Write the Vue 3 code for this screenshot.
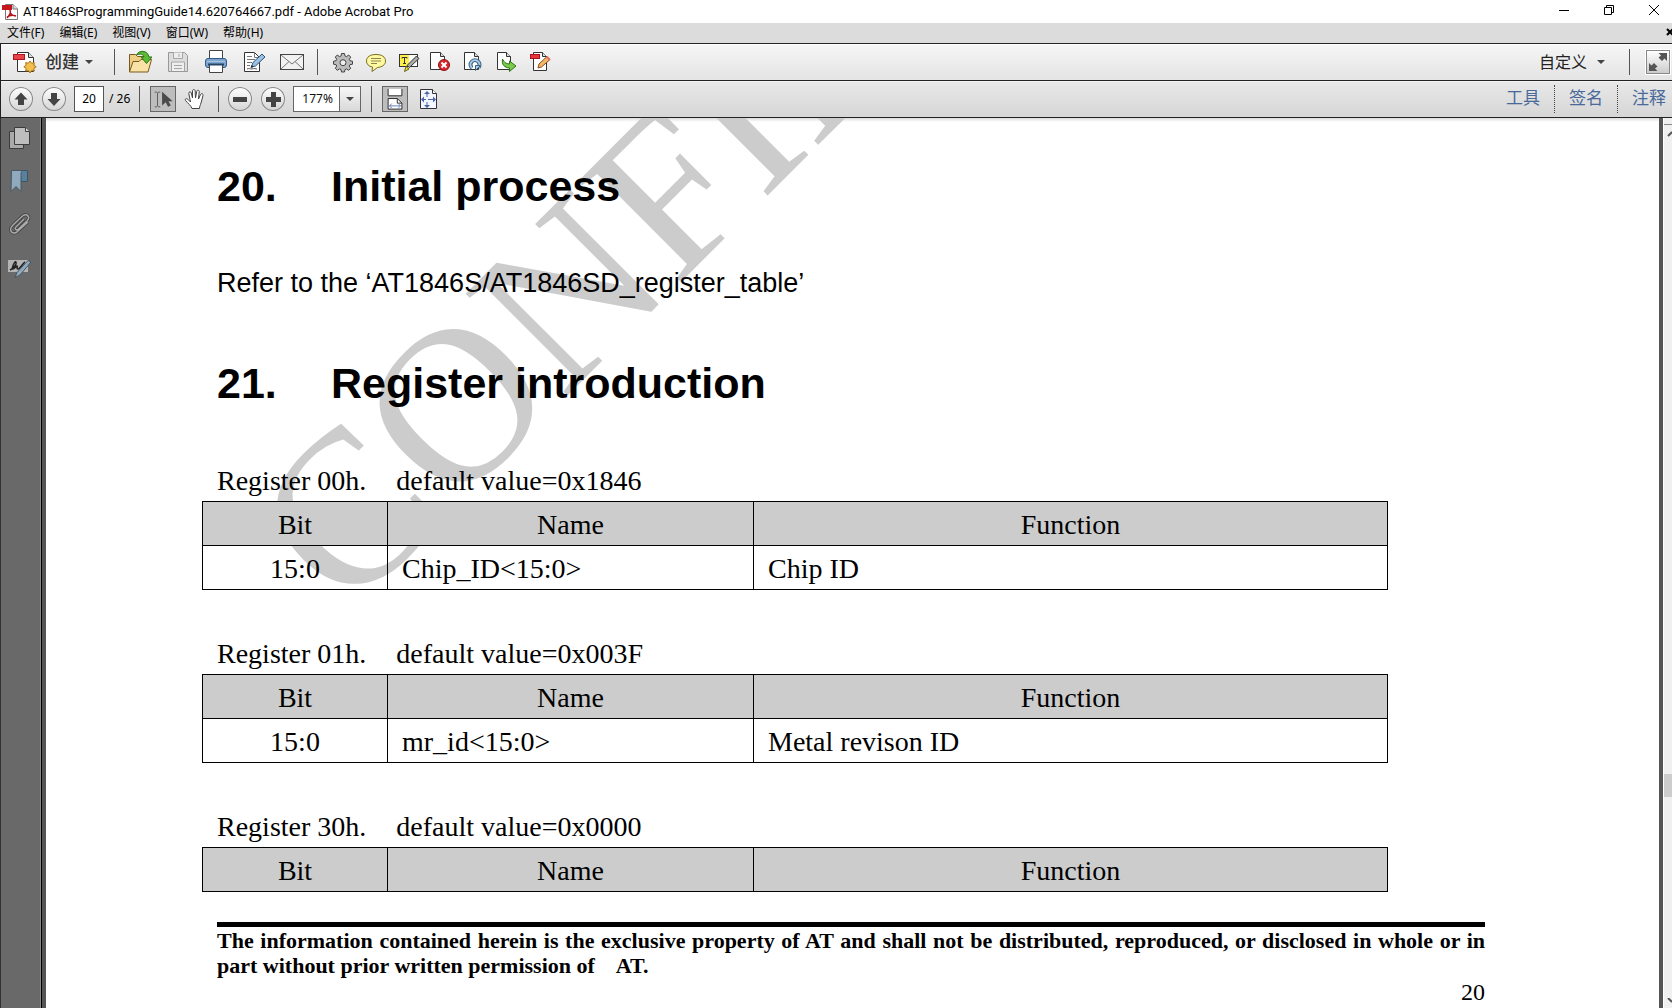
<script setup>
import { ref } from 'vue'

const menus = ['文件(F)', '编辑(E)', '视图(V)', '窗口(W)', '帮助(H)']
const page = ref('20')
const zoom = ref('177%')

const registers = [
  { title: 'Register 00h.', value: 'default value=0x1846', rows: [['15:0', 'Chip_ID<15:0>', 'Chip ID']] },
  { title: 'Register 01h.', value: 'default value=0x003F', rows: [['15:0', 'mr_id<15:0>', 'Metal revison ID']] },
  { title: 'Register 30h.', value: 'default value=0x0000', rows: [] },
]
</script>

<template>
  <div class="app">
    <header class="titlebar">
      <svg class="app-icon" width="16" height="16" viewBox="0 0 16 16">
        <path d="M3.500.5h7.500l4.500 4.500v10.500h-12z" fill="#fff" stroke="#777" />
        <path d="M11 .5v4.500h4.500" fill="#ddd" stroke="#777" />
        <rect x="0" y="1" width="10" height="5" fill="#c4161c" />
        <path d="M5 14c3-3 4-6 3-8M8 6c0 4 3 6 6 6M5 13c3-2 6-2 9-1" fill="none" stroke="#b5121b" stroke-width="1.500" />
      </svg>
      <span class="title">AT1846SProgrammingGuide14.620764667.pdf - Adobe Acrobat Pro</span>
      <div class="window-buttons">
        <button aria-label="Minimize"><svg width="12" height="12" viewBox="0 0 12 12"><path d="M1 6.500h10" stroke="#000" /></svg></button>
        <button aria-label="Restore"><svg width="12" height="12" viewBox="0 0 12 12" fill="none" stroke="#000"><path d="M1.500 3.500h7v7h-7zM3.500 3.500v-2h7v7h-2" /></svg></button>
        <button aria-label="Close"><svg width="12" height="12" viewBox="0 0 12 12"><path d="M1 1l10 10M11 1L1 11" stroke="#000" /></svg></button>
      </div>
    </header>

    <nav class="menubar">
      <button v-for="m in menus" :key="m">{{ m }}</button>
      <button class="close-doc" aria-label="Close document">
        <svg width="8" height="8" viewBox="0 0 8 8"><path d="M1 1l6 6M7 1L1 7" stroke="#000" stroke-width="2" /></svg>
      </button>
    </nav>

    <div class="toolbar main-tools">
      <button class="create">
        <svg width="24" height="24" viewBox="0 0 24 24">
          <path d="M4.500 2.500h11l5 5v14h-16z" fill="#fff" stroke="#333" />
          <path d="M15.500 2.500v5h5" fill="#ddd" stroke="#333" />
          <rect x=".5" y="4.500" width="11" height="5" fill="#e8434b" stroke="#b0141c" />
          <path d="M17 11l1.600 2.200 2.700-.6-.4 2.700 2.300 1.500-2.300 1.500.4 2.700-2.700-.5L17 23l-1.600-2.500-2.700.5.4-2.700-2.300-1.500 2.300-1.500-.4-2.700 2.700.6z" fill="#f4be4c" stroke="#a8761c" />
        </svg>
        <span>创建</span>
        <i class="caret"></i>
      </button>
      <i class="sep"></i>
      <div class="group wide">
        <button aria-label="Open">
          <svg width="24" height="24" viewBox="0 0 24 24">
            <path d="M1.500 21.500v-17h6l2 2h11v4" fill="#efcf86" stroke="#7a5a1c" />
            <path d="M1.500 22l3.500-10.500h6l2-2h10.500l-3.500 12.500z" fill="#f9e2a6" stroke="#7a5a1c" />
            <path d="M8.500 5c2-5 11-5.500 12.500 2h3l-5.500 6.500-5.500-6.500h3c-1-3.500-4-3.500-7.500-2z" fill="#5cba35" stroke="#2a7a18" />
          </svg>
        </button>
        <button aria-label="Save">
          <svg width="24" height="24" viewBox="0 0 24 24">
            <path d="M2.500 2.500h16l3 3v16h-19z" fill="#ddd" stroke="#999" />
            <path d="M7.500 2.500v6h9v-6M13 4v3M5.500 21v-9h13v9M8 15.500h8M8 18.500h8" fill="#eee" stroke="#a5a5a5" />
          </svg>
        </button>
        <button aria-label="Print">
          <svg width="24" height="24" viewBox="0 0 24 24">
            <path d="M5.500 9v-8.500h13v8.500" fill="#fff" stroke="#444" />
            <rect x="1.500" y="8.500" width="21" height="9" rx="2.500" fill="#7ea5cd" stroke="#315a86" />
            <path d="M3 11.500h18" stroke="#a8c5e2" />
            <path d="M5.500 14.500h13v8h-13z" fill="#fff" stroke="#444" />
            <path d="M4 14.500h16" stroke="#244668" stroke-width="2" />
          </svg>
        </button>
        <button aria-label="Edit">
          <svg width="24" height="24" viewBox="0 0 24 24">
            <path d="M2.500 2.500h10l5 5v14h-15z" fill="#fff" stroke="#333" />
            <path d="M12.500 2.500v5h5M5 6.500h5M5 9.500h8M5 12.500h5M5 15.500h3" fill="none" stroke="#777" />
            <path d="M9.500 17l1.500-4.500 9-8.500 3 3-9.500 9z" fill="#9bc1e3" stroke="#305577" />
            <path d="M8.500 18l1-3 2 2z" fill="#222" />
            <path d="M5 19c2-1 3 0 4 0s3-1 6 0" fill="none" stroke="#555" />
          </svg>
        </button>
        <button aria-label="E-mail">
          <svg width="24" height="24" viewBox="0 0 24 24">
            <rect x=".5" y="4.500" width="23" height="15" fill="#f2f2f2" stroke="#444" />
            <path d="M1 5l11 9 11-9M1 19l8-7.500M23 19l-8-7.500" fill="none" stroke="#777" />
          </svg>
        </button>
      </div>
      <i class="sep"></i>
      <div class="group">
        <button aria-label="Settings">
          <svg width="24" height="24" viewBox="0 0 24 24">
            <path d="M10.500 3.500h3l.5 2.500 1.500.6L17.700 5l2 2.100L18.300 9.300l.6 1.400 2.600.5v3l-2.600.5-.6 1.400 1.400 2.200-2 2-2.200-1.400-1.500.6-.5 2.500h-3l-.5-2.500-1.500-.6-2.200 1.400-2-2 1.400-2.200-.6-1.400-2.600-.5v-3l2.600-.5.6-1.400L4.300 7.100l2-2.100 2.200 1.600L10 6z" fill="#bbb" stroke="#444" />
            <circle cx="12" cy="12.700" r="3" fill="#eee" stroke="#444" />
          </svg>
        </button>
        <button aria-label="Comment">
          <svg width="24" height="24" viewBox="0 0 24 24">
            <path d="M12 4.500c6 0 9.500 2.500 9.500 6.500s-3.500 6-8 6.500L8 21.500l.5-4.500c-4-.7-6-3-6-6 0-4 3.500-6.500 9.500-6.500z" fill="#fff9a2" stroke="#776f1f" />
            <path d="M7 8.500h10M7 11h10M7 13.500h6" stroke="#8b8550" />
          </svg>
        </button>
        <button aria-label="Highlight text">
          <svg width="24" height="24" viewBox="0 0 24 24">
            <rect x="2.500" y="4.500" width="18" height="12" fill="#fff" stroke="#333" />
            <rect x="3" y="5" width="9" height="11" fill="#fff04a" />
            <path d="M5 8.500v-1h5v1M7.500 7.500v6M6 13.500h3" stroke="#333" fill="none" />
            <path d="M10 15.500L19.500 6l2.500 2.500-9.500 9z" fill="#aaa" stroke="#333" />
            <path d="M7.500 21.500l1.500-5 3 2.500z" fill="#f0e030" stroke="#6a6410" />
          </svg>
        </button>
        <button aria-label="Delete page">
          <svg width="24" height="24" viewBox="0 0 24 24">
            <path d="M.5 2.500h10l4 4v13h-14z" fill="#fff" stroke="#333" />
            <path d="M10.500 2.500v4h4" fill="#ddd" stroke="#333" />
            <circle cx="14" cy="15" r="5.500" fill="#d9262d" stroke="#8e1117" />
            <path d="M11.500 12.500l5 5M16.500 12.500l-5 5" stroke="#fff" stroke-width="2" />
          </svg>
        </button>
        <button aria-label="Rotate page">
          <svg width="24" height="24" viewBox="0 0 24 24">
            <path d="M1.500 2.500h10l4 4v13h-14z" fill="#fff" stroke="#333" />
            <path d="M11.500 2.500v4h4" fill="#ddd" stroke="#333" />
            <path d="M9 18a4.500 4.500 0 1 1 6.500-.5" fill="none" stroke="#3b6285" stroke-width="4" />
            <path d="M9 18a4.500 4.500 0 1 1 6.500-.5" fill="none" stroke="#a9c9e4" stroke-width="2" />
            <path d="M12.500 20.500v-5h5z" fill="#a9c9e4" stroke="#3b6285" />
          </svg>
        </button>
        <button aria-label="Export page">
          <svg width="24" height="24" viewBox="0 0 24 24">
            <path d="M1.500 2.500h9l4 4v13h-13z" fill="#fff" stroke="#333" />
            <path d="M10.500 2.500v4h4" fill="#ddd" stroke="#333" />
            <path d="M6.500 9c-1 6 2 8.500 7 9v3.500l6.500-5.500-6.500-5v3c-4 0-5.500-2-7-5z" fill="#7acb4d" stroke="#2c7417" />
          </svg>
        </button>
        <button aria-label="Edit PDF">
          <svg width="24" height="24" viewBox="0 0 24 24">
            <path d="M4.500 2.500h9l4 4v14h-13z" fill="#fff" stroke="#333" />
            <path d="M13.500 2.500v4h4" fill="#ddd" stroke="#333" />
            <rect x="1.500" y="4.500" width="9" height="4" fill="#e8343c" stroke="#a8141c" />
            <path d="M9 18l1-4 8-7.500 3 3-8.500 7.500z" fill="#f3b765" stroke="#8a4b1d" />
            <path d="M17 7.500l1.500-1.500 3 3-1.500 1.500z" fill="#e8706c" />
          </svg>
        </button>
      </div>
      <button class="customize"><span>自定义</span><i class="caret"></i></button>
      <i class="sep"></i>
      <button class="expand" aria-label="Read mode">
        <svg width="22" height="22" viewBox="0 0 22 22"><path d="M20 2v8l-2.500-2.500-2.500 2.500-3.500-3.500L14 4.500 11.500 2zM2 20v-8l2.500 2.500L7 12l3.500 3.500L8 17.500l2.500 2.500z" fill="#555" /></svg>
      </button>
    </div>

    <div class="toolbar nav-tools">
      <button class="round" aria-label="Previous page"><svg width="24" height="24" viewBox="0 0 24 24"><path d="M12 5.500l6.500 7H15v5.500H9v-5.500H5.500z" fill="#444" /></svg></button>
      <button class="round" aria-label="Next page"><svg width="24" height="24" viewBox="0 0 24 24"><path d="M12 19l6.500-7H15V6H9v6H5.500z" fill="#444" /></svg></button>
      <label class="pager"><input v-model="page" aria-label="Page number" /><span>/ 26</span></label>
      <i class="sep"></i>
      <button class="pressed" aria-label="Select tool">
        <svg width="24" height="24" viewBox="0 0 24 24">
          <path d="M3 4.500h2l1 1 1-1h2M6 5.500v14M3 20.500h2l1-1 1 1h2" fill="none" stroke="#555" />
          <path d="M11 4v15l4-3.500 2.500 5 3-1.500-2.500-4.500h4.500z" fill="#4a4a4a" />
        </svg>
      </button>
      <button class="hand" aria-label="Hand tool">
        <svg width="24" height="24" viewBox="0 0 24 24">
          <path d="M9 21.500c-1-3-4-5-6.500-8-1-1.500 1-2.500 2.300-1.200L7.500 15 5.800 6.500c-.2-2 2-2.200 2.500-.5L9.500 11V4c.2-2 2.500-2 2.700 0l.3 7 1.200-6.500c.5-2 2.800-1.500 2.500.5L15.500 12l2-4.500c.8-1.600 3-.8 2.500 1L18 16c-.5 2-1.500 3-1.500 5.500z" fill="#fff" stroke="#444" />
        </svg>
      </button>
      <i class="sep"></i>
      <button class="round" aria-label="Zoom out"><svg width="24" height="24" viewBox="0 0 24 24"><path d="M5 10h14v5H5z" fill="#444" /></svg></button>
      <button class="round" aria-label="Zoom in"><svg width="24" height="24" viewBox="0 0 24 24"><path d="M10 5h5v5h5v5h-5v5h-5v-5H5v-5h5z" fill="#444" /></svg></button>
      <div class="zoom">
        <select v-model="zoom" aria-label="Zoom level"><option>177%</option><option>100%</option></select>
        <span class="drop"><i class="caret"></i></span>
      </div>
      <i class="sep"></i>
      <button class="pressed" aria-label="Fit width">
        <svg width="24" height="24" viewBox="0 0 24 24">
          <path d="M4.500 1v7.500h15V1" fill="#fff" stroke="#222" />
          <path d="M4.500 23V11.500h10l5 5V23z" fill="#fff" stroke="#222" />
          <path d="M14.500 11.500v5h5" fill="none" stroke="#222" />
          <path d="M6 19.500h12M8.500 17l-2.500 2.500L8.500 22M15.500 17l2.500 2.500-2.500 2.500" fill="none" stroke="#5873b5" />
        </svg>
      </button>
      <button class="fit-page" aria-label="Fit page">
        <svg width="24" height="24" viewBox="0 0 24 24">
          <path d="M3.500 2.500h12l4 4v15h-16z" fill="#f4f7ff" stroke="#333" />
          <path d="M15.500 2.500v4h4" fill="#fff" stroke="#333" />
          <path d="M10 4l-3 3h6zM10 21l-3-3h6zM4 12.500l3-3v6zM19 12.500l-3-3v6z" fill="#4b65a9" />
          <path d="M10 7v3M10 15v3M7 12.500h2M11 12.500h5" stroke="#4b65a9" />
        </svg>
      </button>
      <div class="panels">
        <button>工具</button><button>签名</button><button>注释</button>
      </div>
    </div>

    <div class="workspace">
      <aside class="sidebar">
        <button aria-label="Page thumbnails">
          <svg width="24" height="24" viewBox="0 0 24 24">
            <path d="M2.500 5.500h14v17h-14z" fill="#aaa" stroke="#3c3c3c" />
            <path d="M7.500 1.500h11l4 4v13h-15z" fill="#bebebe" stroke="#3c3c3c" />
            <path d="M18.500 1.500v4h4" fill="#ddd" stroke="#3c3c3c" />
          </svg>
        </button>
        <button aria-label="Bookmarks">
          <svg width="24" height="24" viewBox="0 0 24 24">
            <path d="M13 1.500h7.500v11H14z" fill="#58819c" stroke="#3d5568" />
            <path d="M4.500 1.500h11c-1.500 1-1.500 3-1.500 5v16l-5-5-5 5z" fill="#91a9bc" stroke="#465866" />
          </svg>
        </button>
        <button aria-label="Attachments">
          <svg width="24" height="24" viewBox="0 0 24 24" fill="none">
            <path d="M17 7l-8 8c-2 2 .5 4 2.500 2L20 9c4-4 0-8-4.500-5L6 13c-5 5-1 10 4 7l11-10" stroke="#3c3c3c" stroke-width="3" />
            <path d="M17 7l-8 8c-2 2 .5 4 2.500 2L20 9c4-4 0-8-4.500-5L6 13c-5 5-1 10 4 7l11-10" stroke="#aaa" stroke-width="1.500" />
          </svg>
        </button>
        <button aria-label="Signatures">
          <svg width="24" height="24" viewBox="0 0 24 24">
            <path d="M1 5h20v12H1z" fill="#b4b4b4" />
            <path d="M3 15c4-2 7-6 6-8s-5 7-3 7 3-3 4-3-1 3 1 3 5-6 7-7" fill="none" stroke="#222" stroke-width="1.500" />
            <path d="M8 22.500l2-5L21 5.500l3 1.500-11 13z" fill="#91a9bc" stroke="#445766" />
          </svg>
        </button>
      </aside>

      <main class="document">
        <div class="watermark" aria-hidden="true">CONFIDENTIAL</div>
        <article>
          <h1><span class="num">20.</span>Initial process</h1>
          <p class="refer">Refer to the ‘AT1846S/AT1846SD_register_table’</p>
          <h1><span class="num">21.</span>Register introduction</h1>
          <section v-for="r in registers" :key="r.title" class="register">
            <p class="caption">{{ r.title }}<span>{{ r.value }}</span></p>
            <table>
              <colgroup><col class="c-bit" /><col class="c-name" /><col /></colgroup>
              <thead><tr><th>Bit</th><th>Name</th><th>Function</th></tr></thead>
              <tbody v-if="r.rows.length">
                <tr v-for="row in r.rows" :key="row[0]"><td v-for="c in row" :key="c">{{ c }}</td></tr>
              </tbody>
            </table>
          </section>
          <footer>
            <p>The information contained herein is the exclusive property of AT and shall not be distributed, reproduced, or disclosed in whole or in part without prior written permission of&nbsp;&nbsp;&nbsp; AT.</p>
            <div class="folio">20</div>
          </footer>
        </article>
      </main>

      <div class="scrollbar">
        <div class="split"></div>
        <svg class="arrow" width="8" height="18" viewBox="0 0 8 18"><path d="M4 11l4-4" stroke="#555" stroke-width="2" /></svg>
        <div class="track-before"></div>
        <div class="thumb"></div>
        <div class="track-after"></div>
        <svg class="arrow" width="8" height="10" viewBox="0 0 8 10"><path d="M4 0l4 4" stroke="#555" stroke-width="2" /></svg>
      </div>
    </div>
  </div>
</template>

<style>
body { margin: 0; }
</style>

<style scoped>
.app {
  display: flex;
  flex-direction: column;
  height: 100vh;
  overflow: hidden;
  background: #fff;
  color: #000;
  font-family: "Noto Sans", "Noto Sans CJK SC", sans-serif;
  font-size: 12px;
}
* { box-sizing: border-box; }
button {
  margin: 0;
  padding: 0;
  border: 0;
  background: none;
  font: inherit;
  color: inherit;
  white-space: nowrap;
}
svg { display: block; flex: none; }
p, h1 { margin: 0; }

.titlebar { display: flex; align-items: center; height: 23px; padding-left: 2px; flex: none; }
.title { margin-left: 5px; font-family: Roboto, sans-serif; font-size: 13px; white-space: nowrap; }
.window-buttons { display: flex; gap: 33px; margin-left: auto; padding: 0 12px 4px 0; }

.menubar { display: flex; align-items: center; gap: 15px; height: 20px; padding: 0 0 2px 7px; background: #dcdcdc; flex: none; }
.close-doc { margin: 0 -2px 0 auto; }

.toolbar { display: flex; align-items: center; height: 37px; border-top: 1px solid #222; border-left: 1px solid #222; flex: none; }
.main-tools { padding-bottom: 1px; background: linear-gradient(#f6f6f6, #e4e4e4); box-shadow: inset 0 1px #fff; }
.nav-tools { height: 38px; padding-bottom: 1px; border-bottom: 1px solid #222; background: linear-gradient(#e8e8e8, #d6d6d6); box-shadow: inset 0 1px #f4f4f4; }
.sep { width: 1px; height: 26px; background: #555; flex: none; }
.caret { border: 4px solid transparent; border-top-color: #444; border-bottom: 0; flex: none; }
.create { display: flex; align-items: center; margin: 0 21px 0 12px; font-size: 17px; font-weight: 500; line-height: 24px; color: #333; }
.create span { margin: 0 6px 0 8px; }
.group { display: flex; gap: 9px; margin-left: 13px; }
.group.wide { gap: 14px; margin-right: 13px; }
.customize { display: flex; align-items: center; gap: 10px; margin: 0 24px 0 auto; font-size: 16px; line-height: 24px; color: #222; }
.expand { margin: 0 2px 0 16px; border: 1px solid #888; background: linear-gradient(#fff, #ccc); box-shadow: 0 0 0 1px #fff; }

.round { margin-left: 9px; border-radius: 50%; background: linear-gradient(#fff, #d4d4d4); box-shadow: inset 0 0 0 1px #888; }
.round:first-child { margin-left: 8px; }
.pager { display: flex; align-items: center; gap: 5px; margin: 0 9px 0 8px; font-size: 12px; }
.pager span { white-space: nowrap; }
.pager input { width: 30px; height: 26px; padding: 0; border: 1px solid #555; background: #fff; font: inherit; text-align: center; }
.pressed { padding: 0 1px; margin-left: 10px; height: 26px; border: 1px solid #666; background: #bdbdbd; }
.pressed svg { width: 22px; }
.hand { margin: 0 11px 0 7px; }
.zoom { display: flex; width: 68px; height: 26px; margin: 0 10px 0 8px; border: 1px solid #666; background: #fff; }
.zoom select { width: 45px; padding: 0 0 0 8px; border: 0; appearance: none; background: #fff; font: inherit; color: #111; }
.drop { display: flex; flex: 1; align-items: center; justify-content: center; border-left: 1px solid #666; background: linear-gradient(#f8f8f8, #d8d8d8); }
.fit-page { margin-left: 9px; }
.panels { display: flex; margin-left: auto; font-size: 17px; line-height: 24px; color: #48699a; }
.panels button { width: 63px; height: 28px; padding-bottom: 2px; border-right: 1px dotted #444; }
.panels button:last-child { width: 54px; padding-left: 8px; border: 0; }

.workspace { display: flex; flex: 1; min-height: 0; border-left: 1px solid #333; }
.sidebar {
  display: flex;
  flex-direction: column;
  gap: 19px;
  width: 45px;
  padding: 8px 0 0 6px;
  border-right: 4px solid #555;
  background: linear-gradient(90deg, #696969 39px, #888 39px 40px, #000 40px);
  flex: none;
}
.sidebar button { width: 24px; height: 24px; }

.document {
  position: relative;
  flex: 1;
  min-width: 0;
  overflow: hidden;
  border-right: 4px solid #555;
  background: linear-gradient(#ddd, #fff 4px);
}
.watermark {
  position: absolute;
  top: 296px;
  left: 301px;
  font: 220px/256px "Liberation Serif", serif;
  white-space: nowrap;
  color: #ccc;
  transform-origin: 0 202px;
  transform: rotate(-45deg);
}
article { position: relative; padding: 44px 174px 0 171px; font: 28px/32px "Liberation Serif", serif; }
h1 { font: bold 43px/48px "Liberation Sans", sans-serif; }
.num { display: inline-block; width: 114px; }
.refer { margin: 57px 0 60px; font-family: "Liberation Sans", sans-serif; font-size: 27px; }
.register { margin-top: 48px; }
h1 + .register { margin-top: 58px; }
.caption span { margin-left: 30px; }
table { width: calc(100% - 82px); margin: 4px 0 0 -15px; border-collapse: collapse; table-layout: fixed; }
.c-bit { width: 185px; }
.c-name { width: 366px; }
th, td { height: 44px; padding: 2px 14px 0; border: 1px solid #000; font-weight: normal; text-align: left; }
th { background: #ccc; text-align: center; }
td:first-child { text-align: center; }
footer { margin-top: 30px; padding-top: 1px; border-top: 5px solid #000; }
footer p { font-size: 22px; line-height: 25px; font-weight: bold; text-align: justify; }
.folio { font-size: 24px; line-height: 28px; text-align: right; }

.scrollbar { display: flex; flex-direction: column; width: 9px; border-left: 1px solid #fff; background: #f0f0f0; flex: none; }
.split { height: 7px; border-bottom: 1px solid #888; flex: none; }
.track-before { flex: 631; }
.thumb { height: 23px; background: #cdcdcd; flex: none; }
.track-after { flex: 201; }
</style>
